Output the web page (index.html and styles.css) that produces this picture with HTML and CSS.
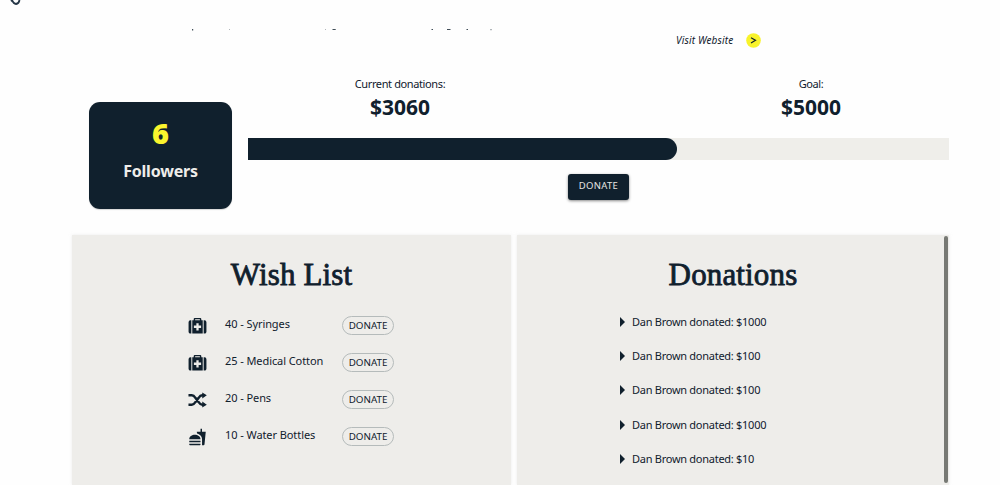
FILE: index.html
```
<!DOCTYPE html>
<html lang="en">
<head>
<meta charset="utf-8">
<title>Donations</title>
<link rel="stylesheet" href="styles.css">
</head>
<body>
<svg class="defs" width="0" height="0">
  <symbol id="medkit" viewBox="0 0 20 18">
    <path fill-rule="evenodd" d="M6 3V1.600Q6 .5 7.100 .5H12.900Q14 .5 14 1.600V3H15.500V17H4.500V3ZM7.500 3H12.500V2H7.500ZM8.800 6V8.600H6.200V11.200H8.800V13.800H11.200V11.200H13.800V8.600H11.200V6Z"/>
    <path d="M3.500 3V17H2.600Q.6 17 .6 15V5Q.6 3 2.600 3ZM16.500 3V17H17.400Q19.400 17 19.400 15V5Q19.400 3 17.400 3Z"/>
  </symbol>
  <symbol id="shuffle" viewBox="0 0 20 16">
    <path class="strand" d="M.5 3H4Q6 3 8 6L11 10Q13 13 15 13H16M.5 13H4Q6 13 8 10L11 6Q13 3 15 3H16"/>
    <path d="M15 0L19.800 3L15 6.300ZM15 9.700L19.800 13L15 16Z"/>
  </symbol>
  <symbol id="fastfood" viewBox="0 0 24 24">
    <path d="M18.060 22.990h1.660c.84 0 1.530-.64 1.630-1.460L23 5.050h-5V1h-1.970v4.050h-4.970l.3 2.340c1.710.47 3.310 1.320 4.270 2.260 1.440 1.420 2.430 2.890 2.430 5.290v8.050zM1 21.990V21h15.030v.99c0 .55-.45 1-1.010 1H2.010c-.56 0-1.010-.45-1.010-1zm15.030-7c0-8-15.030-8-15.030 0h15.030zM1.020 17h15v2h-15z"/>
  </symbol>
</svg>
<main class="page">
  <header class="top">
    <svg class="mark" width="12" height="6" viewBox="0 0 12 6"><path d="M1 0L3.500 2.200 M2 0Q3.500 4 6 4Q9 3.500 9.500 0"/></svg>
    <svg class="cutline" width="306" height="3" viewBox="0 0 306 3"><path d="M1 0h1.200v1.500H1zM141.500 0h3.200v1.100h-3.200zM240.500 0h1.500v1h-1.500zM256 0h3.500v1.100H256zM275.500 0h1.500v1h-1.500z"/><path class="faint" d="M38 0h1v1h-1zM134 0h1v1h-1zM299 0h2v1.300h-2z"/></svg>
    <a class="visit"><span>Visit Website</span>
      <svg width="15" height="15" viewBox="0 0 15 15"><circle class="disc" cx="7.500" cy="7.500" r="7.300"/><path d="M5 4.700L9.500 7.300L5 10"/></svg>
    </a>
  </header>
  <section class="stats">
    <div class="followers"><strong>6</strong><span>Followers</span></div>
    <div class="progress">
      <div class="figures">
        <div class="figure current"><span>Current donations:</span><strong>$3060</strong></div>
        <div class="figure goal"><span>Goal:</span><strong>$5000</strong></div>
      </div>
      <div class="track"><div class="fill" style="width:61.200%"></div></div>
      <button class="donate">DONATE</button>
    </div>
  </section>
  <section class="panels">
    <div class="panel wishes">
      <h2>Wish List</h2>
      <ul>
        <li><svg class="icon"><use href="#medkit"/></svg><span>40 - Syringes</span><button>DONATE</button></li>
        <li><svg class="icon"><use href="#medkit"/></svg><span>25 - Medical Cotton</span><button>DONATE</button></li>
        <li><svg class="icon"><use href="#shuffle"/></svg><span>20 - Pens</span><button>DONATE</button></li>
        <li><svg class="icon"><use href="#fastfood"/></svg><span>10 - Water Bottles</span><button>DONATE</button></li>
      </ul>
    </div>
    <div class="panel gifts">
      <div class="content">
        <h2>Donations</h2>
        <ul>
          <li><i></i><span>Dan Brown donated: $1000</span></li>
          <li><i></i><span>Dan Brown donated: $100</span></li>
          <li><i></i><span>Dan Brown donated: $100</span></li>
          <li><i></i><span>Dan Brown donated: $1000</span></li>
          <li><i></i><span>Dan Brown donated: $10</span></li>
        </ul>
      </div>
      <div class="scrollbar"></div>
    </div>
  </section>
</main>
</body>
</html>
```
FILE: styles.css
```
* { box-sizing: border-box; }
body { margin: 0; overflow: hidden; background: #fefefe; color: #10202d; font: 11px/16px "Noto Sans", sans-serif; }
.defs { position: absolute; }
.page { width: 1000px; height: 485px; display: flex; flex-direction: column; overflow: hidden; }
ul { list-style: none; margin: 0; padding: 0; }
button { font: inherit; color: inherit; padding: 0; white-space: nowrap; }
span { white-space: nowrap; }

.top { height: 74px; flex: none; display: flex; align-items: flex-start; padding-left: 10px; }
.mark { fill: none; stroke: #263747; stroke-width: 1.8; }
.cutline { margin: 29px 0 0 169px; fill: #10202dcc; }
.faint { opacity: .4; }
.visit { display: flex; align-items: center; gap: 13px; margin: 32px 0 0 179px; font-size: 10px; font-style: italic; letter-spacing: .16px; }
.visit svg { fill: none; stroke: #10202d; stroke-width: 1.2; }
.visit .disc { fill: #f8f32b; stroke: none; }

.stats { height: 161px; flex: none; display: flex; padding-left: 89px; gap: 16px; }
.followers { width: 143px; height: 107px; margin-top: 28px; padding-top: 15px; border-radius: 11px; background: #10202d; display: flex; flex-direction: column; align-items: center; font-weight: 700; box-shadow: 0 1px 1px #8885; }
.followers strong { color: #faf42d; font-size: 29px; line-height: 32px; }
.followers span { color: #eeedea; font-size: 16px; line-height: 24px; margin-top: 10px; letter-spacing: -.2px; }
.progress { width: 701px; display: flex; flex-direction: column; align-items: center; }
.figures { width: 701px; height: 64px; display: flex; padding-left: 92px; gap: 291px; }
.figure { width: 120px; display: flex; flex-direction: column; align-items: center; padding-top: 2px; }
.figure span { letter-spacing: -.38px; }
.figure strong { font-size: 21px; line-height: 28px; margin-top: 1px; }
.track { width: 701px; height: 22px; background: #efeeea; }
.fill { height: 22px; border-radius: 0 11px 11px 0; background: #10202d; }
.donate { width: 61px; height: 26px; margin-top: 14px; padding-bottom: 2px; border: 0; border-radius: 3px; background: #10202d; color: #e6e5e2; font-size: 9.500px; letter-spacing: .3px; box-shadow: 0 1px 3px #0007; }

.panels { display: flex; gap: 6px; padding-left: 72px; height: 250px; }
.panel { background: #eeedea; box-shadow: 0 0 3px #ddd8; }
.wishes { width: 439px; }
.gifts { width: 432px; display: flex; }
h2 { margin: 0; padding-top: 20px; height: 71px; text-align: center; font: 400 31px/40px "Liberation Serif", serif; letter-spacing: .15px; -webkit-text-stroke: .8px #10202d; }
.wishes li { height: 37px; display: grid; grid-template-columns: 37px 117px 52px; align-items: center; padding-left: 116px; }
.icon { width: 19px; height: 18px; fill: #10202d; margin-top: 3px; }
.strand { fill: none; stroke: #10202d; stroke-width: 2.6; }
.wishes li span { margin-top: -2px; letter-spacing: -.08px; }
.wishes button { height: 19px; margin-top: 1px; border: 1px solid #b5bbbb; border-radius: 10px; background: none; font-size: 9.800px; line-height: 15px; }
.content { width: 427px; padding-left: 5px; }
.gifts ul { margin-top: -1px; }
.gifts li { height: 34.200px; display: flex; align-items: center; gap: 7px; padding-left: 98px; letter-spacing: -.27px; }
.gifts i { width: 0; border-left: 5px solid #10202d; border-top: 5px solid transparent; border-bottom: 5px solid transparent; }
.scrollbar { width: 4px; height: 247px; margin-top: 1px; border-radius: 2px; background: #777974; }
```
